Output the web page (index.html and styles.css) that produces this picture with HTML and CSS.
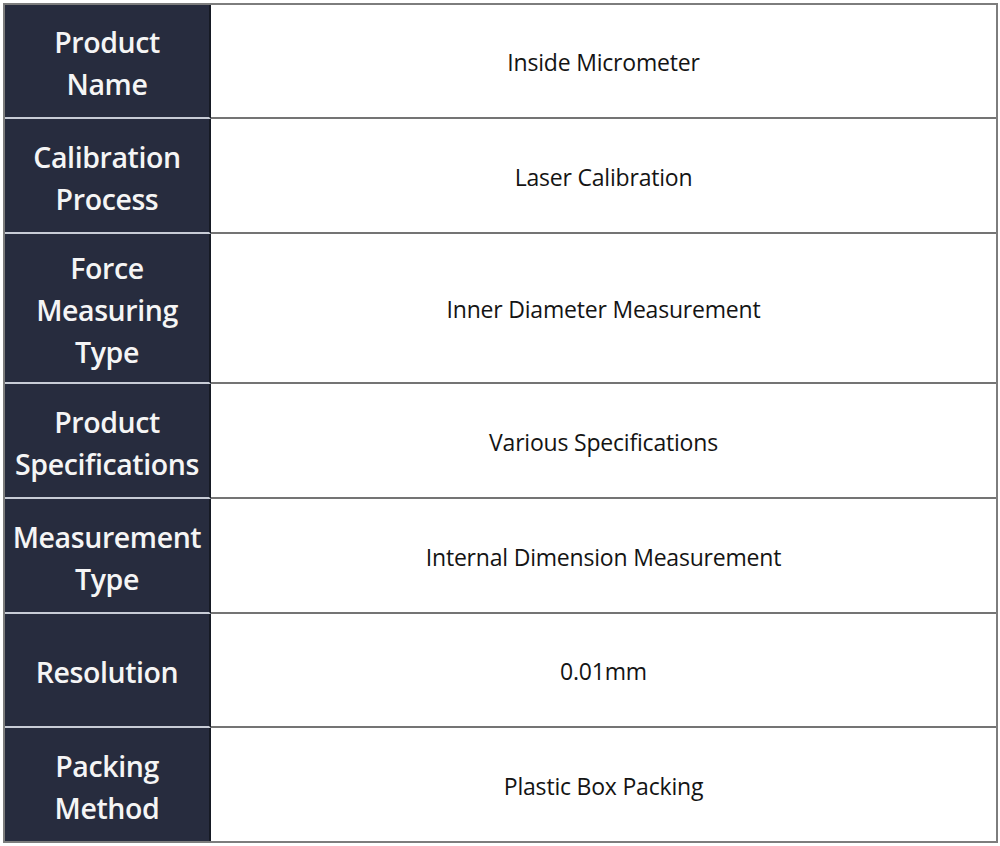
FILE: index.html
```html
<!DOCTYPE html>
<html>
<head>
<meta charset="utf-8">
<link rel="stylesheet" href="styles.css">
</head>
<body>
<div class="spec">
  <div class="row h114"><div class="key">Product<br>Name</div><div class="val">Inside Micrometer</div></div>
  <div class="row h115"><div class="key">Calibration<br>Process</div><div class="val">Laser Calibration</div></div>
  <div class="row h150"><div class="key">Force<br>Measuring<br>Type</div><div class="val">Inner Diameter Measurement</div></div>
  <div class="row h115"><div class="key">Product<br>Specifications</div><div class="val">Various Specifications</div></div>
  <div class="row h115"><div class="key">Measurement<br>Type</div><div class="val">Internal Dimension Measurement</div></div>
  <div class="row h114"><div class="key">Resolution</div><div class="val">0.01mm</div></div>
  <div class="row h113 last"><div class="key">Packing<br>Method</div><div class="val">Plastic Box Packing</div></div>
</div>
</body>
</html>
```
FILE: styles.css
```css
html, body {
  margin: 0;
  padding: 0;
  background: #ffffff;
}
body {
  width: 1000px;
  height: 846px;
  overflow: hidden;
}
.spec {
  margin: 3px 0 0 3px;
  width: 991px;
  border: 2px solid #7d7d7d;
  display: flex;
  flex-direction: column;
  font-family: "Open Sans", "Noto Sans", sans-serif;
}
.row {
  display: grid;
  grid-template-columns: 206px 1fr;
  box-sizing: border-box;
}
.h113 { height: 113px; }
.h114 { height: 114px; }
.h115 { height: 115px; }
.h150 { height: 150px; }
.key {
  background: #272c3e;
  color: #f5f5f5;
  border-right: 2px solid #161a24;
  border-bottom: 2px solid #c8ccd6;
  font-size: 28.5px;
  font-weight: 600;
  line-height: 42px;
  padding-top: 4px;
  box-sizing: border-box;
  display: flex;
  align-items: center;
  justify-content: center;
  text-align: center;
  letter-spacing: -0.4px;
}
.val {
  border-bottom: 2px solid #747474;
  color: #141414;
  font-size: 23px;
  padding-top: 2px;
  box-sizing: border-box;
  display: flex;
  align-items: center;
  justify-content: center;
  text-align: center;
  letter-spacing: -0.2px;
}
.last .key, .last .val {
  border-bottom: none;
}
```
